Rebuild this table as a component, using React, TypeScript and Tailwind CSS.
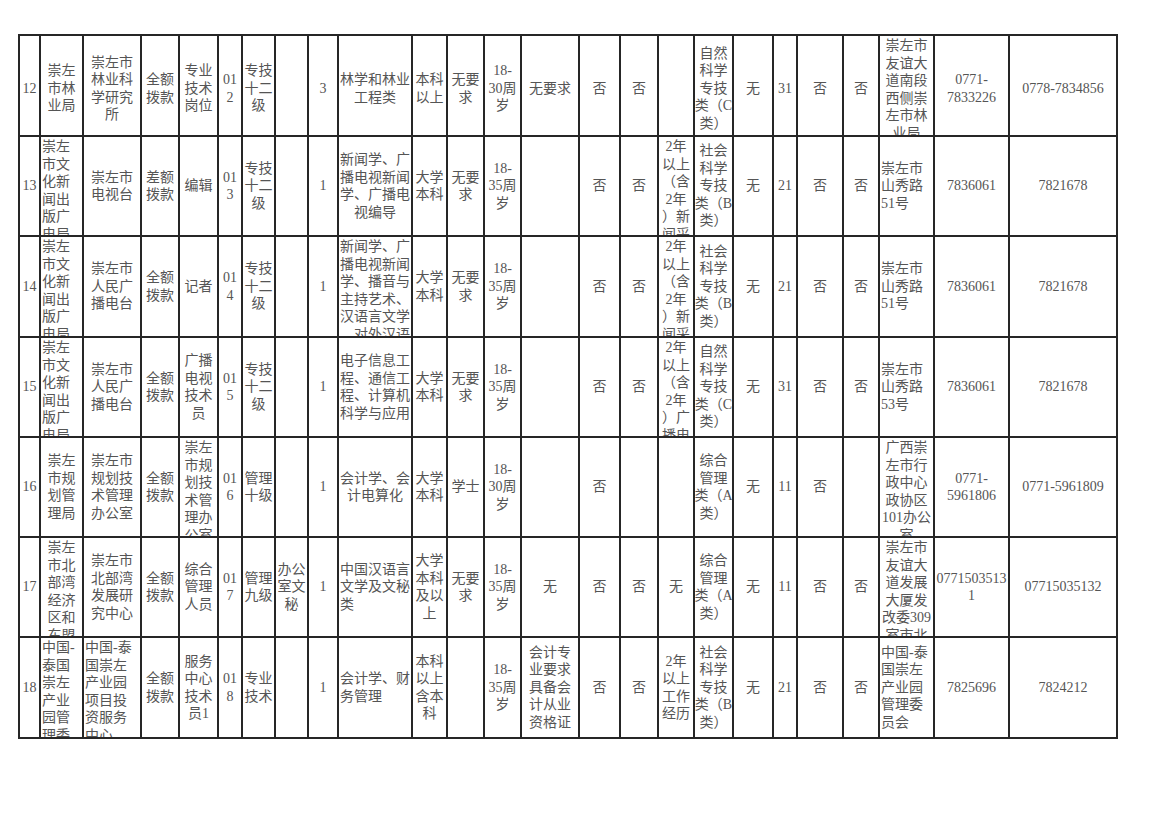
// Recruitment table scan: 25 columns, rows 12–18.
// Cell text: '/' splits lines, a leading '<' means left aligned.
const rows: string[][] = [
  ['12', '崇左/市林/业局', '崇左市/林业科/学研究/所', '全额/拨款', '专业/技术/岗位', '01/2', '专技/十二/级', '', '3', '林学和林业/工程类', '本科/以上', '无要/求', '18-/30周/岁', '无要求', '否', '否', '', '自然/科学/专技/类（C/类）', '无', '31', '否', '否', '崇左市/友谊大/道南段/西侧崇/左市林/业局', '0771-/7833226', '0778-7834856'],
  ['13', '<崇左/市文/化新/闻出/版广/电局', '崇左市/电视台', '差额/拨款', '编辑', '01/3', '专技/十二/级', '', '1', '新闻学、广/播电视新闻/学、广播电/视编导', '大学/本科', '无要/求', '18-/35周/岁', '', '否', '否', '2年/以上/（含/2年/）新/闻采', '社会/科学/专技/类（B/类）', '无', '21', '否', '否', '<崇左市/山秀路/51号', '7836061', '7821678'],
  ['14', '<崇左/市文/化新/闻出/版广/电局', '崇左市/人民广/播电台', '全额/拨款', '记者', '01/4', '专技/十二/级', '', '1', '新闻学、广/播电视新闻/学、播音与/主持艺术、/汉语言文学/、对外汉语', '大学/本科', '无要/求', '18-/35周/岁', '', '否', '否', '2年/以上/（含/2年/）新/闻采', '社会/科学/专技/类（B/类）', '无', '21', '否', '否', '<崇左市/山秀路/51号', '7836061', '7821678'],
  ['15', '<崇左/市文/化新/闻出/版广/电局', '崇左市/人民广/播电台', '全额/拨款', '广播/电视/技术/员', '01/5', '专技/十二/级', '', '1', '电子信息工/程、通信工/程、计算机/科学与应用', '大学/本科', '无要/求', '18-/35周/岁', '', '否', '否', '2年/以上/（含/2年/）广/播电', '自然/科学/专技/类（C/类）', '无', '31', '否', '否', '<崇左市/山秀路/53号', '7836061', '7821678'],
  ['16', '崇左/市规/划管/理局', '崇左市/规划技/术管理/办公室', '全额/拨款', '崇左/市规/划技/术管/理办/公室', '01/6', '管理/十级', '', '1', '会计学、会/计电算化', '大学/本科', '学士', '18-/30周/岁', '', '否', '', '', '综合/管理/类（A/类）', '无', '11', '否', '', '广西崇/左市行/政中心/政协区/101办公/室', '0771-/5961806', '0771-5961809'],
  ['17', '崇左/市北/部湾/经济/区和/东盟', '崇左市/北部湾/发展研/究中心', '全额/拨款', '综合/管理/人员', '01/7', '管理/九级', '办公/室文/秘', '1', '<中国汉语言/文学及文秘/类', '大学/本科/及以/上', '无要/求', '18-/35周/岁', '无', '否', '否', '无', '综合/管理/类（A/类）', '无', '11', '否', '否', '崇左市/友谊大/道发展/大厦发/改委309/室市北', '0771503513/1', '07715035132'],
  ['18', '<中国-/泰国/崇左/产业/园管/理委', '<中国-泰/国崇左/产业园/项目投/资服务/中心', '全额/拨款', '服务/中心/技术/员1', '01/8', '专业/技术', '', '1', '<会计学、财/务管理', '本科/以上/含本/科', '', '18-/35周/岁', '会计专/业要求/具备会/计从业/资格证', '否', '否', '2年/以上/工作/经历', '社会/科学/专技/类（B/类）', '无', '21', '否', '否', '<中国-泰/国崇左/产业园/管理委/员会', '7825696', '7824212'],
];

function Cell({ text, firstRow }: { text: string; firstRow: boolean }) {
  const left = text.startsWith('<');
  const lines = text ? text.replace('<', '').split('/') : [];
  // six lines don't fit in a row: the scan shows them clipped from the top
  const overflow = lines.length >= 6;

  return (
    <div
      className={`flex flex-col overflow-hidden border-r-2 border-b-2 border-[#262626] ${
        left ? 'items-start pl-[1px] text-left' : 'items-center text-center'
      } ${overflow ? 'justify-start pt-[1px]' : 'justify-center'} ${
        firstRow && !overflow ? 'pt-[6px]' : ''
      }`}
    >
      {lines.map((line, i) => (
        <div key={i} className="whitespace-nowrap">
          {line}
        </div>
      ))}
    </div>
  );
}

export default function App() {
  return (
    <div className="min-h-[827px] bg-white pt-[34px] pl-[18px]">
      <div className="grid w-max grid-cols-[21px_43px_58px_38px_39px_24px_33px_33px_30px_74px_35px_37px_37px_58px_41px_38px_36px_39px_40px_24px_46px_36px_55px_75px_108px] grid-rows-[101px_100px_101px_100px_100px_100px_101px] border-t-2 border-l-2 border-[#262626] font-['Liberation_Serif','Noto_Sans_CJK_SC',serif] text-[14px] leading-[17.5px] text-[#555]">
        {rows.map((row, r) =>
          row.map((text, c) => <Cell key={`${r}-${c}`} text={text} firstRow={r === 0} />)
        )}
      </div>
    </div>
  );
}
